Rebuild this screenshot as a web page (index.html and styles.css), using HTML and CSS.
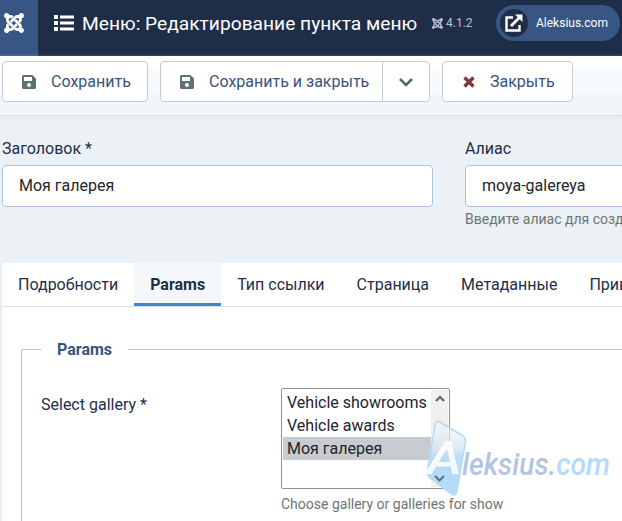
FILE: index.html
```html
<!DOCTYPE html>
<html lang="ru">

<head>
    <meta charset="UTF-8">
    <meta name="viewport" content="width=device-width, initial-scale=1.0">
    <title>Меню: Редактирование пункта меню</title>
    <link rel="stylesheet" href="styles.css">
</head>

<body>
    <svg class="defs" width="0" height="0">
        <symbol id="joomla" viewBox="0 32 448 448">
            <path d="M.6 92.1C.6 58.8 27.4 32 60.4 32c30 0 54.5 21.9 59.2 50.2 32.6-7.6 67.1.6 96.5 30l-44.3 44.3c-20.5-20.5-42.6-16.3-55.4-3.5-14.3 14.3-14.3 37.9 0 52.2l99.5 99.5-44 44.3c-87.7-87.2-49.7-49.7-99.8-99.7-26.8-26.5-35-64.8-24.8-98.9C20.4 144.6.6 120.7.6 92.1zm129.5 116.4l44.3 44.3c10-10 89.7-89.7 99.7-99.8 14.3-14.3 37.6-14.3 51.9 0 12.8 12.8 17 35-3.5 55.4l44 44.3c31.2-31.2 38.5-67.6 28.9-101.2 29.2-4.1 51.9-29.2 51.9-59.5 0-33.2-26.8-60.1-59.8-60.1-30.3 0-55.4 22.5-59.5 51.6-33.8-9.9-71.7-1.5-98.3 25.1-18.3 19.1-71.1 71.5-99.6 99.9zm266.3 152.2c8.2-32.7-.9-68.5-26.3-93.9-11.8-12.2 5 4.7-99.5-99.7l-44.3 44.3 99.7 99.7c14.3 14.3 14.3 37.6 0 51.9-12.8 12.8-35 17-55.4-3.5l-44 44.3c27.6 30.2 68 38.8 102.7 28 5.5 27.4 29.7 48.1 58.9 48.1 33 0 59.8-26.8 59.8-60.1 0-30.2-22.5-55-51.6-59.1zm-84.3-53.1l-44-44.3c-87 86.4-50.4 50.4-99.7 99.8-14.3 14.3-37.6 14.3-51.9 0-13.1-13.4-16.9-35.3 3.2-55.4l-44-44.3c-30.2 30.2-38 65.2-29.5 98.3-26.7 6-46.2 29.9-46.2 58.2C0 453.2 26.8 480 59.8 480c28.6 0 52.5-19.8 58.6-46.7 32.7 8.2 68.5-.6 94.2-26 32.1-32 12.2-12.4 99.5-99.7z"/>
        </symbol>
        <symbol id="save" viewBox="0 32 448 448">
            <path d="M433.941 129.941l-83.882-83.882A48 48 0 0 0 316.118 32H48C21.49 32 0 53.49 0 80v352c0 26.51 21.49 48 48 48h352c26.51 0 48-21.49 48-48V163.882a48 48 0 0 0-14.059-33.941zM224 416c-35.346 0-64-28.654-64-64 0-35.346 28.654-64 64-64s64 28.654 64 64c0 35.346-28.654 64-64 64zm96-304.52V212c0 6.627-5.373 12-12 12H76c-6.627 0-12-5.373-12-12V108c0-6.627 5.373-12 12-12h228.52c3.183 0 6.235 1.264 8.485 3.515l3.48 3.48A11.996 11.996 0 0 1 320 111.48z"/>
        </symbol>
    </svg>

    <header class="header">
        <div class="logo">
            <svg width="20" height="20"><use href="#joomla"/></svg>
        </div>
        <svg class="list-icon" width="20" height="18" viewBox="0 0 20 18">
            <path d="M0 1h4v4H0zM0 7h4v4H0zM0 13h4v4H0zM6 1.500h14v3H6zM6 7.500h14v3H6zM6 13.500h14v3H6z"/>
        </svg>
        <h1 class="page-title">Меню: Редактирование пункта меню</h1>
        <div class="version">
            <svg width="11" height="11"><use href="#joomla"/></svg>
            <span>4.1.2</span>
        </div>
        <a class="site-link">
            <span class="site-icon">
                <svg width="18" height="18" viewBox="0 0 18 18">
                    <path d="M8 3.500H1.500v13h13V11" fill="none" stroke="#fff" stroke-width="2.400"/>
                    <path d="M6 12L14 4" stroke="#fff" stroke-width="2.800"/>
                    <path d="M10 .5h7.500V8z" fill="#fff"/>
                </svg>
            </span>
            <span>Aleksius.com</span>
        </a>
    </header>

    <div class="toolbar">
        <button class="btn btn-save">
            <svg width="14" height="14"><use href="#save"/></svg>
            <span>Сохранить</span>
        </button>
        <div class="btn-group">
            <button class="btn btn-save-close">
                <svg width="14" height="14"><use href="#save"/></svg>
                <span>Сохранить и закрыть</span>
            </button>
            <button class="btn btn-toggle">
                <svg width="16" height="10" viewBox="0 0 16 10">
                    <path d="M2 2l6 6 6-6" fill="none" stroke="#546a6a" stroke-width="2.600"/>
                </svg>
            </button>
        </div>
        <button class="btn btn-close">
            <svg width="12" height="12" viewBox="0 0 12 12">
                <path d="M1.500 1.500l9 9M10.500 1.500l-9 9" stroke="#7d3a36" stroke-width="3.400"/>
            </svg>
            <span>Закрыть</span>
        </button>
    </div>

    <div class="title-form">
        <div class="field">
            <label for="title">Заголовок *</label>
            <input type="text" id="title" value="Моя галерея">
        </div>
        <div class="field field-alias">
            <label for="alias">Алиас</label>
            <input type="text" id="alias" value="moya-galereya">
            <div class="help">Введите алиас для создания</div>
        </div>
    </div>

    <main class="card">
        <nav class="tabs">
            <a class="tab">Подробности</a>
            <a class="tab active">Params</a>
            <a class="tab">Тип ссылки</a>
            <a class="tab">Страница</a>
            <a class="tab">Метаданные</a>
            <a class="tab">Привязка</a>
        </nav>
        <fieldset class="options">
            <legend>Params</legend>
            <div class="control-group">
                <div class="control-label">Select gallery *</div>
                <div class="controls">
                    <div class="listbox">
                        <ul class="listbox-items">
                            <li>Vehicle showrooms</li>
                            <li>Vehicle awards</li>
                            <li class="selected">Моя галерея</li>
                        </ul>
                        <div class="scrollbar">
                            <svg width="10" height="7" viewBox="0 0 10 7"><path d="M1 6l4-4 4 4"/></svg>
                            <svg width="10" height="7" viewBox="0 0 10 7"><path d="M1 1l4 4 4-4"/></svg>
                        </div>
                    </div>
                    <div class="help">Choose gallery or galleries for show</div>
                </div>
            </div>
        </fieldset>
    </main>

    <svg class="watermark" width="196" height="80" viewBox="426 418 196 80">
        <defs>
            <linearGradient id="wm" x1="0" y1="0" x2="0" y2="1">
                <stop offset="0" stop-color="#f7fafd" stop-opacity=".5"/>
                <stop offset=".4" stop-color="#cddcef" stop-opacity=".7"/>
                <stop offset=".46" stop-color="#b3d9f7" stop-opacity=".9"/>
                <stop offset="1" stop-color="#b3dcf8"/>
            </linearGradient>
        </defs>
        <path d="M439 421.500L463 436Q466 438 465.500 442L457 491Q456 497 451 494L429 477Q427 475 427.500 471L435 425Q436 420 439 421.500z" fill="url(#wm)" stroke="#b3daf7" stroke-width="1.500"/>
        <path d="M435 476l4.500 4.500 4.500-4.500" fill="none" stroke="#5c7280" stroke-width="2"/>
        <text class="wm-cap" x="427" y="474" textLength="35" lengthAdjust="spacingAndGlyphs">A</text>
        <text class="wm-text" x="462" y="474.500" textLength="148" lengthAdjust="spacingAndGlyphs">leksius.<tspan class="wm-com">com</tspan></text>
    </svg>
</body>

</html>
```
FILE: styles.css
```css
* {
    box-sizing: border-box;
}

body {
    font-family: Roboto, "Liberation Sans", sans-serif;
    font-size: 16px;
    line-height: 24px;
    color: #22262a;
    background-color: #ecf1f5;
    margin: 0;
    height: 521px;
    overflow: hidden;
    display: flex;
    flex-direction: column;
}

.defs {
    position: absolute;
}

svg {
    flex: none;
    display: block;
}

/* header */
.header {
    height: 56px;
    flex: none;
    display: flex;
    align-items: flex-start;
    background-color: #1f2e48;
    color: #fff;
    fill: #fff;
    white-space: nowrap;
}

.logo {
    width: 38px;
    height: 56px;
    padding: 13px 0 0 4px;
    background-color: #375683;
}

.list-icon {
    margin: 14px 0 0 16px;
}

.page-title {
    width: 335px;
    margin: 11px 0 0 8px;
    font-size: 19.2px;
    line-height: 26px;
    font-weight: 400;
}

.version {
    width: 64px;
    display: flex;
    align-items: center;
    gap: 3px;
    margin: 11px 0 0 15px;
    font-size: 12px;
    color: #b9c2d0;
    fill: #b9c2d0;
}

.site-link {
    width: 124px;
    height: 36px;
    display: flex;
    align-items: center;
    gap: 8px;
    margin-top: 5px;
    padding-left: 4px;
    border-radius: 18px;
    background-color: #375683;
    font-size: 12px;
}

.site-icon {
    width: 28px;
    height: 28px;
    display: flex;
    align-items: center;
    justify-content: center;
    border-radius: 50%;
    background-color: #1f2e48;
}

/* toolbar */
.toolbar {
    height: 60px;
    flex: none;
    display: flex;
    align-items: flex-start;
    gap: 12px;
    padding: 5px 0 0 2px;
    background: linear-gradient(#fff 13px, #f7fafd 13px, #f7fafd 38px, #f2f6fa 38px);
    border-bottom: 1px solid #d9e2ea;
    box-shadow: 0 2px 4px #e3eaf1;
}

.btn {
    height: 41px;
    display: flex;
    align-items: center;
    gap: 15px;
    padding: 0 0 0 19px;
    border: 1px solid #c6cbd3;
    border-radius: 4px;
    background-color: #fff;
    font: inherit;
    color: #36547f;
    fill: #5d7272;
    white-space: nowrap;
}

.btn-save {
    width: 146px;
}

.btn-group {
    display: flex;
}

.btn-save-close {
    width: 223px;
    border-radius: 4px 0 0 4px;
}

.btn-toggle {
    width: 48px;
    margin-left: -1px;
    padding: 0;
    justify-content: center;
    border-radius: 0 4px 4px 0;
}

.btn-close {
    width: 131px;
    padding-left: 20px;
}

/* title and alias */
.title-form {
    height: 147px;
    flex: none;
    display: flex;
    gap: 32px;
    padding: 21px 0 0 2px;
    color: #1f2e48;
}

.field {
    width: 431px;
    flex: none;
}

.field-alias {
    width: 157px;
    overflow: hidden;
    white-space: nowrap;
}

.field label {
    display: block;
    margin-bottom: 4px;
}

.field input {
    display: block;
    width: 431px;
    height: 42px;
    padding: 0 16px 2px;
    border: 1px solid #abc3de;
    border-radius: 4px;
    background-color: #fff;
    color: #22262a;
    font: inherit;
}

.help {
    font-size: 14px;
    line-height: 20px;
    color: #6a7676;
}

.field .help {
    margin-top: 2px;
}

/* card with tabs */
.card {
    flex: 1;
    background-color: #fff;
    border-left: 2px solid #e6eef8;
    overflow: hidden;
}

.tabs {
    height: 44px;
    display: flex;
    border-bottom: 1px solid #d9e2ea;
    color: #1f2e48;
    white-space: nowrap;
    overflow: hidden;
}

.tab {
    flex: none;
    height: 43px;
    padding: 10px 16px 0;
}

.tab.active {
    background-color: #f4f8fb;
    border-bottom: 3px solid #4184cb;
    font-weight: 700;
}

.options {
    margin: 29px 0 0 19px;
    height: 250px;
    padding: 0 19px;
    border: 1px solid #b0c3de;
    border-right: 0;
}

.options legend {
    padding: 2px 16px 0;
    font-weight: 700;
    color: #36547f;
}

.control-group {
    display: flex;
    margin-top: 26px;
}

.control-label {
    width: 240px;
    padding-top: 5px;
    color: #1f2e48;
}

.listbox {
    width: 169px;
    height: 101px;
    display: flex;
    padding: 1px;
    border: 1px solid #8f8f9d;
    border-radius: 2px;
}

.listbox-items {
    flex: 1;
    margin: 0;
    padding: 1px 0 0;
    list-style: none;
    line-height: 23px;
    white-space: nowrap;
}

.listbox-items li {
    padding-left: 4px;
}

.listbox-items .selected {
    background-color: #c8cbd0;
}

.scrollbar {
    width: 17px;
    display: flex;
    flex-direction: column;
    justify-content: space-between;
    align-items: center;
    padding: 5px 0;
    background-color: #f0f0f0;
    fill: none;
    stroke: #606060;
    stroke-width: 2;
}

.controls .help {
    margin-top: 5px;
}

/* site watermark over the page */
.watermark {
    position: absolute;
    left: 426px;
    top: 418px;
}

.wm-cap {
    font: italic 500 46px Roboto, sans-serif;
    fill: #fff;
    fill-opacity: .85;
}

.wm-text {
    font: italic 500 31px Roboto, sans-serif;
    fill: #b2c4de;
}

.wm-com {
    fill: #b3daf7;
}
```
